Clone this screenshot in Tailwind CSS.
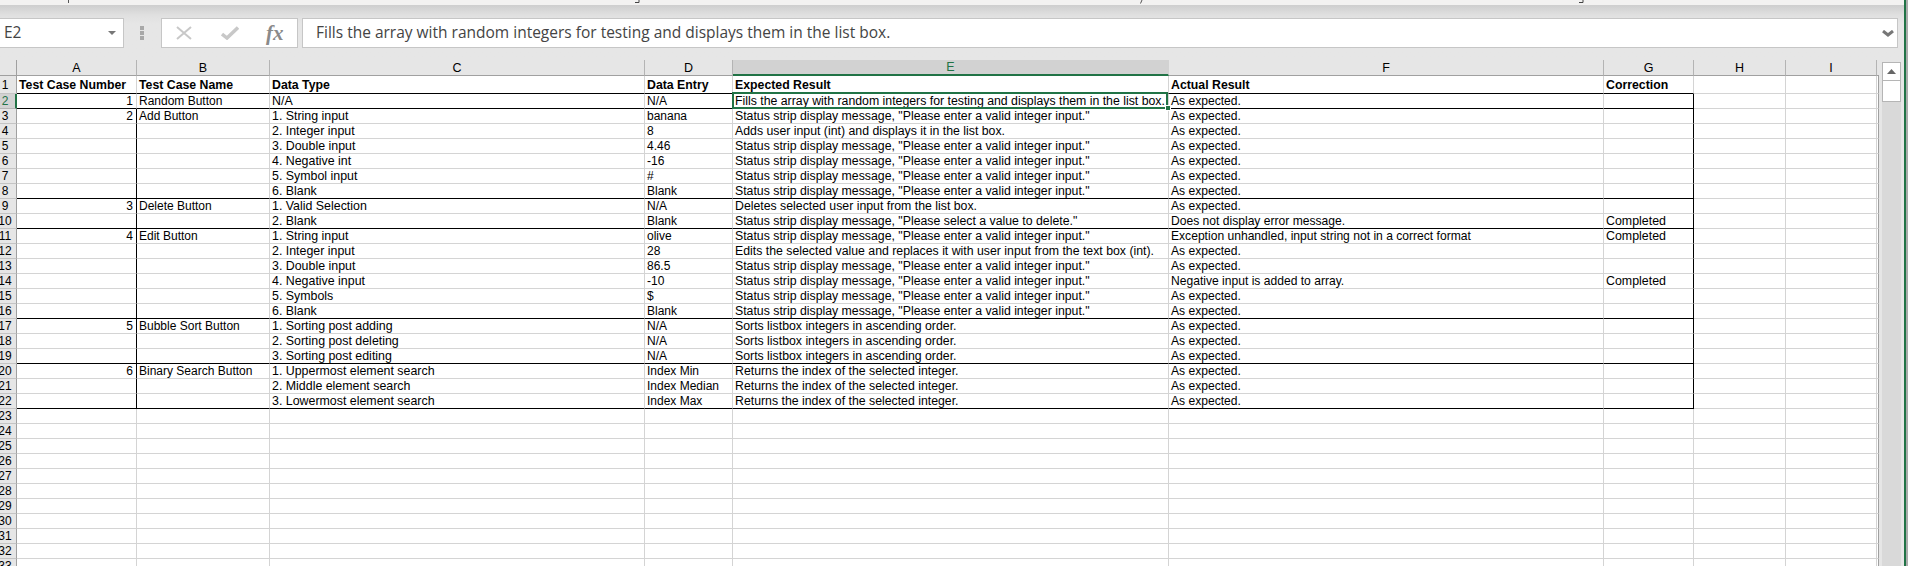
<!DOCTYPE html>
<html lang="en">
<head>
<meta charset="utf-8"/>
<title>Test cases</title>
<script src="https://cdn.jsdelivr.net/npm/@tailwindcss/browser@4"></script>
</head>
<body class="bg-[#e6e6e6] overflow-hidden font-['Liberation_Sans',Arial,sans-serif]">
<div class="w-[1908px] h-[566px] flex overflow-hidden">

   <div class="w-[1904px] flex flex-col">
      <!-- ribbon edge, with the cut off descenders of the ribbon text -->
      <div class="h-[5px] bg-[#f3f2f1] flex items-start">
         <i class="ml-[68px] w-[1px] h-[3px] bg-[#555]"></i>
         <svg class="ml-[565px]" width="6" height="4" viewBox="0 0 6 4" fill="none" stroke="#444"><path d="M5 0v2.500H1"/></svg>
         <svg class="ml-[499px]" width="4" height="4" viewBox="0 0 4 4" fill="none" stroke="#555"><path d="M3 0L1.500 3.500"/></svg>
         <svg class="ml-[435px]" width="6" height="4" viewBox="0 0 6 4" fill="none" stroke="#444"><path d="M5 0v2.500H1"/></svg>
      </div>
      <div class="h-[10px] bg-gradient-to-b from-[#cecece] to-[#e0e0e0]"></div>

      <!-- formula bar -->
      <div class="h-[45px] flex items-start pt-[3px] pr-[6px] bg-gradient-to-b from-[#e0e0e0] from-0% to-[#e6e6e6] to-20%">
         <div class="w-[124px] h-[30px] bg-white border border-[#c6c6c6] border-l-0 flex items-center justify-between pl-[4px] pr-[7px] text-[15.5px] text-[#444] font-['Open_Sans',sans-serif]">
            <span>E2</span>
            <svg width="8" height="4" viewBox="0 0 8 4"><path d="M0 0h8L4 4z" fill="#777"/></svg>
         </div>
         <div class="w-[37px] h-[30px] pr-[1px] flex flex-col items-center justify-center gap-[1px]">
            <i class="w-[4px] h-[4px] bg-[#a8a8a8]"></i>
            <i class="w-[4px] h-[4px] bg-[#a8a8a8]"></i>
            <i class="w-[4px] h-[4px] bg-[#a8a8a8]"></i>
         </div>
         <div class="w-[137px] h-[30px] bg-white border border-[#c6c6c6] flex items-center pl-[14px]">
            <svg width="16" height="14" viewBox="0 0 16 14" fill="none" stroke="#c8c8c8" stroke-width="2"><path d="M1 1l14 12M15 1L1 13"/></svg>
            <svg class="ml-[29px]" width="18" height="14" viewBox="0 0 18 14" fill="none" stroke="#c8c8c8" stroke-width="3.500"><path d="M1 8l5 4L17 1.500"/></svg>
            <span class="ml-[27px] text-[21px] leading-none font-bold italic text-[#8a8a8a] font-['Liberation_Serif',serif]">fx</span>
         </div>
         <div class="ml-[4px] flex-1 h-[30px] bg-white border border-[#c6c6c6] flex items-center justify-between pl-[13px] pr-[3px] text-[15.5px] text-[#444] font-['Open_Sans',sans-serif]">
            <span>Fills the array with random integers for testing and displays them in the list box.</span>
            <svg width="12" height="7" viewBox="0 0 12 7" fill="none" stroke="#777" stroke-width="3"><path d="M1 1l5 4 5-4"/></svg>
         </div>
      </div>

      <!-- sheet -->
      <div class="flex-1 flex overflow-hidden">
         <div class="w-[1879px] shrink-0 overflow-hidden">
            <table class="table-fixed border-separate border-spacing-0 w-[1879px] text-[12px] leading-[14px] text-black">
               <colgroup>
                  <col class="w-[17px]"/><col class="w-[120px]"/><col class="w-[133px]"/><col class="w-[375px]"/><col class="w-[88px]"/><col class="w-[436px]"/><col class="w-[435px]"/><col class="w-[90px]"/><col class="w-[92px]"/><col class="w-[91px]"/><col class="w-[2px]"/>
               </colgroup>
               <tbody id="rows"></tbody>
            </table>
         </div>
         <div class="ml-[3px] w-[19px] bg-[#d9d9d9] mt-[2px] flex flex-col">
            <div class="h-[19px] bg-white border border-[#b5b5b5] flex items-center justify-center"><svg width="9" height="5" viewBox="0 0 9 5"><path d="M0 5h9L4.500 0z" fill="#666"/></svg></div>
            <div class="h-[21px] bg-white border border-t-0 border-[#b5b5b5]"></div>
         </div>
      </div>
   </div>

   <div class="w-[2px] bg-[#217346]"></div>
   <div class="w-[2px] bg-[#ababab]"></div>
</div>

<script>
   const LETTERS = ['A', 'B', 'C', 'D', 'E', 'F', 'G', 'H', 'I'];
   const VALID = 'Status strip display message, "Please enter a valid integer input."';
   const OK = 'As expected.';
   const SORTS = 'Sorts listbox integers in ascending order.';
   const INDEX = 'Returns the index of the selected integer.';

   // row 2 to row 22: A, B, C, D, E, F, G
   const DATA = [
      ['1', 'Random Button', 'N/A', 'N/A', 'Fills the array with random integers for testing and displays them in the list box.', OK, ''],
      ['2', 'Add Button', '1. String input', 'banana', VALID, OK, ''],
      ['', '', '2. Integer input', '8', 'Adds user input (int) and displays it in the list box.', OK, ''],
      ['', '', '3. Double input', '4.46', VALID, OK, ''],
      ['', '', '4. Negative int', '-16', VALID, OK, ''],
      ['', '', '5. Symbol input', '#', VALID, OK, ''],
      ['', '', '6. Blank', 'Blank', VALID, OK, ''],
      ['3', 'Delete Button', '1. Valid Selection', 'N/A', 'Deletes selected user input from the list box.', OK, ''],
      ['', '', '2. Blank', 'Blank', 'Status strip display message, "Please select a value to delete."', 'Does not display error message.', 'Completed'],
      ['4', 'Edit Button', '1. String input', 'olive', VALID, 'Exception unhandled, input string not in a correct format', 'Completed'],
      ['', '', '2. Integer input', '28', 'Edits the selected value and replaces it with user input from the text box (int).', OK, ''],
      ['', '', '3. Double input', '86.5', VALID, OK, ''],
      ['', '', '4. Negative input', '-10', VALID, 'Negative input is added to array.', 'Completed'],
      ['', '', '5. Symbols', '$', VALID, OK, ''],
      ['', '', '6. Blank', 'Blank', VALID, OK, ''],
      ['5', 'Bubble Sort Button', '1. Sorting post adding', 'N/A', SORTS, OK, ''],
      ['', '', '2. Sorting post deleting', 'N/A', SORTS, OK, ''],
      ['', '', '3. Sorting post editing', 'N/A', SORTS, OK, ''],
      ['6', 'Binary Search Button', '1. Uppermost element search', 'Index Min', INDEX, OK, ''],
      ['', '', '2. Middle element search', 'Index Median', INDEX, OK, ''],
      ['', '', '3. Lowermost element search', 'Index Max', INDEX, OK, ''],
   ];
   // rows whose bottom edge is a black rule
   const RULED = [1, 2, 8, 10, 16, 19, 22];
   const HEADINGS = ['Test Case Number', 'Test Case Name', 'Data Type', 'Data Entry', 'Expected Result', 'Actual Result', 'Correction'];
   // the reference's hinted text runs a bit wider in some columns
   const SIZES = ['text-[12px]', 'text-[12px]', 'text-[12.4px]', 'text-[12px]', 'text-[12.3px]', 'text-[12.1px]', 'text-[12.4px]', 'text-[12px]', 'text-[12px]'];

   const CELL = 'h-[15px] p-0 pl-[2px] overflow-hidden whitespace-nowrap align-middle border-r border-b bg-white';

   let html = '<tr>';
   html += '<td class="h-[16px] p-0 bg-[#e6e6e6] border-b border-r border-[#a0a0a0]"></td>';
   LETTERS.forEach(l => {
      const sel = l === 'E';
      html += '<td class="h-[16px] p-0 text-center align-middle text-[12.5px] border-r ' +
         (sel ? 'bg-[#d2d2d2] text-[#217346] border-b-2 border-b-[#217346] border-r-[#d2d2d2]' : 'bg-[#e6e6e6] border-b border-b-[#a0a0a0] border-r-[#b4b4b4]') + '">' + l + '</td>';
   });
   html += '<td class="h-[16px] p-0 bg-[#e6e6e6] border-b border-b-[#a0a0a0]"></td></tr>';

   for (let r = 1; r <= 33; r++) {
      const sel = r === 2;
      const rowH = r === 1 ? 'h-[18px]' : 'h-[15px]';
      html += '<tr>';
      html += '<td class="' + rowH + ' p-0 overflow-hidden align-middle border-b ' +
         (sel ? 'bg-[#d2d2d2] text-[#217346] border-b-[#b4b4b4] border-r-2 border-r-[#217346]' : 'bg-[#e6e6e6] border-b-[#c4c4c4] border-r border-r-[#a0a0a0]') +
         '"><div class="w-[10px] flex justify-center">' + r + '</div></td>';
      const vals = r === 1 ? HEADINGS.concat(['', '']) : (DATA[r - 2] || ['', '', '', '', '', '', '']).concat(['', '']);
      vals.forEach((v, i) => {
         let cls = CELL + ' ' + rowH + ' ' + (r === 1 ? 'text-[12.3px]' : SIZES[i]);
         cls += RULED.includes(r) && i < 7 ? ' border-b-black' : ' border-b-[#d4d4d4]';
         const inBox = r >= 2 && r <= 22;
         if ((i === 6 && inBox) || (i === 0 && r >= 3 && r <= 22)) cls += ' border-r-black';
         else cls += ' border-r-[#d4d4d4]';
         if (r === 1) cls += ' font-bold align-bottom';
         if (i === 0 && r > 1) cls += ' text-right pr-[3px]';
         if (sel && i === 4) cls += ' relative overflow-visible';
         html += '<td class="' + cls + '">' + v.replace(/"/g, '&quot;') +
            (sel && i === 4 ? '<span class="absolute left-[-1px] top-[-2px] right-0 bottom-[-1px] border-2 border-[#217346] pointer-events-none"></span><span class="absolute right-[-3px] bottom-[-3px] w-[6px] h-[6px] bg-[#217346] border border-white"></span>' : '') +
            '</td>';
      });
      html += '<td class="' + rowH + ' p-0 bg-white border-b border-b-[#d4d4d4] border-r border-r-[#a0a0a0]"></td></tr>';
   }
   document.getElementById('rows').innerHTML = html;
</script>
</body>
</html>
